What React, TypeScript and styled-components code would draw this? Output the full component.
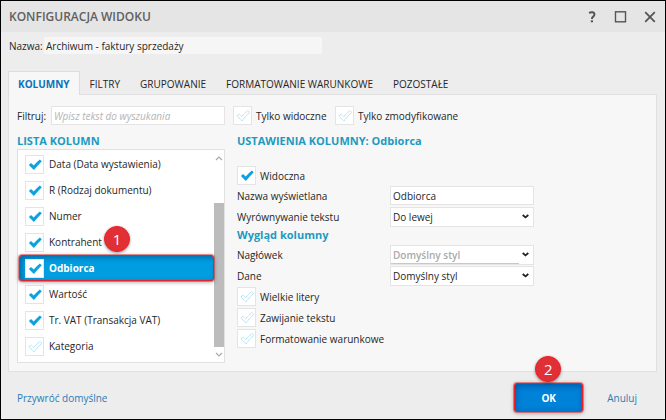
import React, { useState } from 'react';
import styled, { createGlobalStyle, css } from 'styled-components';

const GlobalStyle = createGlobalStyle`
  *, *::before, *::after { box-sizing: border-box; }
  body { margin: 0; }
  body, input, select, button {
    font-family: "Open Sans", "Noto Sans", sans-serif;
    font-size: 10px;
    line-height: 16px;
    color: #262626;
  }
`;

const Dialog = styled.main`
  display: flex;
  flex-direction: column;
  min-height: 100vh;
  border: 1px solid #000;
  background: #ededed;
`;

const TitleBar = styled.header`
  display: flex;
  align-items: center;
  justify-content: space-between;
  height: 31px;
  padding: 0 7px 0 8px;
  background: #e5e5e5;
`;

const Title = styled.h1`
  margin: 0;
  font-size: 12px;
  font-weight: 600;
  color: #606060;
`;

const WindowControls = styled.div`
  display: flex;
  gap: 13px;
`;

const IconButton = styled.button`
  display: grid;
  place-items: center;
  width: 16px;
  height: 16px;
  padding: 0;
  border: 0;
  background: none;
`;

const NameRow = styled.div`
  display: flex;
  align-items: center;
  padding: 5px 8px 0;
`;

const NameLabel = styled.label`
  width: 35px;
  white-space: nowrap;
`;

const NameInput = styled.input`
  flex: 0 1 278px;
  min-width: 0;
  height: 17px;
  padding: 0 2px;
  border: 0;
  background: #f6f6f6;
`;

const Tabs = styled.div`
  display: flex;
  margin: 17px 8px 0 7px;
  padding-right: 8px;
`;

const Tab = styled.button<{ $active?: boolean }>`
  height: 23px;
  padding: 2px 9px 0;
  border: 1px solid transparent;
  border-bottom: 0;
  background: none;
  white-space: nowrap;
  ${({ $active }) =>
    $active &&
    css`
      height: 24px;
      margin-bottom: -1px;
      padding-bottom: 1px;
      border-color: #dedede;
      background: #f7f7f7;
      color: #0b72b9;
      font-weight: 700;
      z-index: 1;
    `}
`;

const Panel = styled.section`
  flex: 1;
  margin: 0 8px 0 7px;
  padding: 11px 8px 7px;
  border: 1px solid #e0e0e0;
  background: #f7f7f7;
`;

const FilterRow = styled.div`
  display: flex;
  align-items: center;
`;

const FilterLabel = styled.label`
  width: 34px;
  white-space: nowrap;
`;

const TextInput = styled.input`
  width: 100%;
  height: 19px;
  padding: 0 2px;
  border: 1px solid #e4e4e4;
  background: #fff;
`;

const FilterInput = styled(TextInput)`
  width: 174px;
  margin-right: 8px;
  &::placeholder {
    color: #b4b4b4;
    font-style: italic;
    opacity: 1;
  }
`;

const FilterOptions = styled.div`
  display: grid;
  grid-template-columns: 102px auto;
`;

const CheckLabel = styled.label<{ $gap?: number }>`
  display: flex;
  align-items: center;
  gap: ${({ $gap = 4 }) => $gap}px;
  white-space: nowrap;
`;

const CheckFrame = styled.span`
  display: grid;
  flex: none;
  width: 19px;
  height: 19px;
  > * {
    grid-area: 1 / 1;
  }
  svg {
    pointer-events: none;
  }
`;

const CheckInput = styled.input`
  appearance: none;
  width: 19px;
  height: 19px;
  margin: 0;
  border: 1px solid #e4e4e4;
  background: #fff;
`;

const Columns = styled.div`
  display: grid;
  grid-template-columns: 208px minmax(0, 1fr);
  column-gap: 12px;
  margin-top: 8px;
`;

const Heading = styled.h2`
  margin: 0;
  font-size: 11px;
  line-height: 16px;
  font-weight: 700;
  color: #1e9ac0;
  white-space: nowrap;
`;

const ListBox = styled.div`
  display: flex;
  border: 1px solid #e0e0e0;
  background: #fff;
`;

const List = styled.ul`
  flex: 1;
  min-width: 0;
  margin: 0;
  padding: 1px 0 3px 1px;
  list-style: none;
`;

const ListItem = styled.li<{ $selected?: boolean }>`
  position: relative;
  display: flex;
  align-items: center;
  height: 26px;
  padding-left: 6px;
  ${({ $selected }) =>
    $selected &&
    css`
      padding-left: 5px;
      border: 1px solid #e0242e;
      border-radius: 3px;
      background: #009de0;
      box-shadow: 0 0 0 1px rgba(215, 30, 40, 0.45), 0 1px 4px rgba(0, 0, 0, 0.4),
        inset 2px 2px 5px rgba(0, 40, 90, 0.4);
      color: #fff;
      font-weight: 700;
      z-index: 1;
    `}
`;

const ScrollBar = styled.div`
  display: flex;
  flex-direction: column;
  align-items: center;
  width: 10px;
  padding: 6px 0 5px;
`;

const ScrollThumb = styled.div`
  width: 10px;
  height: 144px;
  margin: auto 0 5px;
  background: #bcbcbc;
`;

const Badge = styled.span`
  position: absolute;
  display: grid;
  place-items: center;
  width: 26px;
  height: 26px;
  border: 1px solid #f01c22;
  border-radius: 50%;
  background: #e03036;
  box-shadow: 0 1px 3px rgba(0, 0, 0, 0.4);
  color: #fff;
  font-size: 15px;
  font-weight: 400;
  z-index: 2;
`;

const RowBadge = styled(Badge)`
  left: 85px;
  top: -3px;
`;

const ButtonBadge = styled(Badge)`
  left: 21px;
  top: -27px;
`;

const Settings = styled.div`
  display: flex;
  flex-direction: column;
`;

const SettingsBody = styled.div`
  display: flex;
  flex-direction: column;
  padding-top: 17px;
`;

const Field = styled.div`
  display: grid;
  grid-template-columns: 153px minmax(0, 144px);
  align-items: center;
  height: 21px;
`;

const SubHeading = styled(Heading)`
  height: 17px;
`;

const CheckRow = styled.div<{ $height?: number }>`
  display: flex;
  align-items: center;
  height: ${({ $height = 21 }) => $height}px;
`;

const SelectFrame = styled.div`
  display: grid;
  align-items: center;
  > * {
    grid-area: 1 / 1;
  }
  svg {
    justify-self: end;
    margin-right: 5px;
    pointer-events: none;
  }
`;

const Select = styled.select<{ $muted?: boolean }>`
  appearance: none;
  width: 100%;
  height: 20px;
  padding: 0 18px 0 2px;
  border: 1px solid #e4e4e4;
  background: #fff;
  ${({ $muted }) =>
    $muted &&
    css`
      background: linear-gradient(#c8c8c8, #c8c8c8) left bottom / calc(100% - 14px) 1px no-repeat #fff;
      color: #aaa;
      font-weight: 600;
    `}
`;

const Footer = styled.footer`
  display: flex;
  align-items: center;
  padding: 11px 28px 7px 16px;
`;

const Link = styled.a`
  color: #2c7cb5;
  text-decoration: none;
  white-space: nowrap;
`;

const OkWrap = styled.div`
  position: relative;
  margin: 0 24px 0 auto;
`;

const OkButton = styled.button`
  display: block;
  width: 69px;
  height: 29px;
  padding: 0;
  border: 1px solid #f01c24;
  border-radius: 3px;
  background: #0082d9;
  box-shadow: 0 0 0 1px rgba(236, 28, 36, 0.45), 0 1px 4px rgba(0, 0, 0, 0.4),
    inset 1px 2px 6px rgba(0, 30, 90, 0.4);
  color: #fff;
  font-weight: 700;
`;

function Check({ label, initial = false, gap }: { label: string; initial?: boolean; gap?: number }) {
  const [checked, setChecked] = useState(initial);
  return (
    <CheckLabel $gap={gap}>
      <CheckFrame>
        <CheckInput type="checkbox" checked={checked} onChange={() => setChecked(!checked)} />
        <svg width="19" height="19" viewBox="0 0 19 19" aria-hidden="true">
          <path
            d="M3.9 10 L6 7.9 L8.7 10.6 C10.6 8.5 12.4 6.5 14.8 4.5 L16.8 6.3 C14 9 11.5 11.8 8.9 15 Z"
            fill={checked ? '#0aa2df' : '#fbfeff'}
            stroke={checked ? 'none' : '#9fdaf2'}
            strokeWidth="0.9"
            strokeDasharray={checked ? undefined : '1.4 0.5'}
          />
        </svg>
      </CheckFrame>
      {label}
    </CheckLabel>
  );
}

function Dropdown({ id, value, muted }: { id: string; value: string; muted?: boolean }) {
  return (
    <SelectFrame>
      <Select id={id} defaultValue={value} $muted={muted}>
        <option>{value}</option>
      </Select>
      <svg width="7" height="5" viewBox="0 0 7 5" aria-hidden="true">
        <path d="M0.7 1 L3.5 3.4 L6.3 1" fill="none" stroke="#222" strokeWidth="1.8" />
      </svg>
    </SelectFrame>
  );
}

const tabs = ['KOLUMNY', 'FILTRY', 'GRUPOWANIE', 'FORMATOWANIE WARUNKOWE', 'POZOSTAŁE'];

const columns = [
  { name: 'Data (Data wystawienia)', visible: true },
  { name: 'R (Rodzaj dokumentu)', visible: true },
  { name: 'Numer', visible: true },
  { name: 'Kontrahent', visible: true, badge: '1' },
  { name: 'Odbiorca', visible: true, selected: true },
  { name: 'Wartość', visible: true },
  { name: 'Tr. VAT (Transakcja VAT)', visible: true },
  { name: 'Kategoria', visible: false },
];

export default function App() {
  return (
    <>
      <GlobalStyle />
      <Dialog>
        <TitleBar>
          <Title>KONFIGURACJA WIDOKU</Title>
          <WindowControls>
            <IconButton aria-label="Pomoc">
              <svg width="16" height="16" viewBox="0 0 16 16" fill="none" stroke="#555" strokeWidth="2">
                <path d="M5.2 4.1 C6.8 2.8 10.4 2.9 10.4 5.4 C10.4 7.5 7.9 7.6 7.9 10" />
                <path d="M7.9 11.3 V13.3" strokeWidth="2.2" />
              </svg>
            </IconButton>
            <IconButton aria-label="Maksymalizuj">
              <svg width="16" height="16" viewBox="0 0 16 16" fill="none" stroke="#555" strokeWidth="1.4">
                <rect x="2.5" y="2.8" width="10" height="10" />
              </svg>
            </IconButton>
            <IconButton aria-label="Zamknij">
              <svg width="16" height="16" viewBox="0 0 16 16" fill="none" stroke="#555" strokeWidth="1.8">
                <path d="M3.2 3.2 L12.8 12.8 M12.8 3.2 L3.2 12.8" />
              </svg>
            </IconButton>
          </WindowControls>
        </TitleBar>

        <NameRow>
          <NameLabel htmlFor="view-name">Nazwa:</NameLabel>
          <NameInput id="view-name" defaultValue="Archiwum - faktury sprzedaży" />
        </NameRow>

        <Tabs role="tablist">
          {tabs.map((tab, i) => (
            <Tab key={tab} role="tab" aria-selected={i === 0} $active={i === 0}>
              {tab}
            </Tab>
          ))}
        </Tabs>

        <Panel>
          <FilterRow>
            <FilterLabel htmlFor="filter">Filtruj:</FilterLabel>
            <FilterInput id="filter" placeholder="Wpisz tekst do wyszukania" />
            <FilterOptions>
              <Check label="Tylko widoczne" />
              <Check label="Tylko zmodyfikowane" />
            </FilterOptions>
          </FilterRow>

          <Columns>
            <div>
              <Heading>LISTA KOLUMN</Heading>
              <ListBox>
                <List>
                  {columns.map((column) => (
                    <ListItem key={column.name} $selected={column.selected}>
                      <Check label={column.name} initial={column.visible} gap={5} />
                      {column.badge && <RowBadge>{column.badge}</RowBadge>}
                    </ListItem>
                  ))}
                </List>
                <ScrollBar aria-hidden="true">
                  <svg width="8" height="5" viewBox="0 0 8 5" fill="none" stroke="#aaa" strokeWidth="1.2">
                    <path d="M1 4 L4 1 L7 4" />
                  </svg>
                  <ScrollThumb />
                  <svg width="8" height="5" viewBox="0 0 8 5" fill="none" stroke="#aaa" strokeWidth="1.2">
                    <path d="M1 1 L4 4 L7 1" />
                  </svg>
                </ScrollBar>
              </ListBox>
            </div>

            <Settings>
              <Heading>USTAWIENIA KOLUMNY: Odbiorca</Heading>
              <SettingsBody>
                <CheckRow $height={19}>
                  <Check label="Widoczna" initial />
                </CheckRow>
                <Field>
                  <label htmlFor="display-name">Nazwa wyświetlana</label>
                  <TextInput id="display-name" defaultValue="Odbiorca" />
                </Field>
                <Field>
                  <label htmlFor="align">Wyrównywanie tekstu</label>
                  <Dropdown id="align" value="Do lewej" />
                </Field>
                <SubHeading as="h3">Wygląd kolumny</SubHeading>
                <Field>
                  <label htmlFor="header-style">Nagłówek</label>
                  <Dropdown id="header-style" value="Domyślny styl" muted />
                </Field>
                <Field>
                  <label htmlFor="data-style">Dane</label>
                  <Dropdown id="data-style" value="Domyślny styl" />
                </Field>
                <CheckRow>
                  <Check label="Wielkie litery" />
                </CheckRow>
                <CheckRow>
                  <Check label="Zawijanie tekstu" />
                </CheckRow>
                <CheckRow>
                  <Check label="Formatowanie warunkowe" />
                </CheckRow>
              </SettingsBody>
            </Settings>
          </Columns>
        </Panel>

        <Footer>
          <Link href="#domyslne">Przywróć domyślne</Link>
          <OkWrap>
            <ButtonBadge>2</ButtonBadge>
            <OkButton>OK</OkButton>
          </OkWrap>
          <Link href="#anuluj">Anuluj</Link>
        </Footer>
      </Dialog>
    </>
  );
}
